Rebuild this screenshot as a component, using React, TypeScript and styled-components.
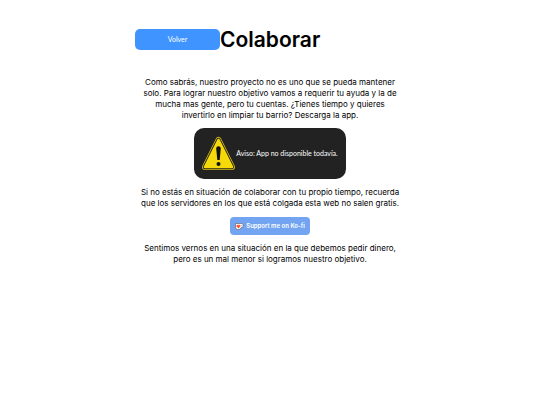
import React from "react";
import styled, { createGlobalStyle } from "styled-components";

const GlobalStyle = createGlobalStyle`
  *, *::before, *::after { box-sizing: border-box; }
  body {
    margin: 0;
    background: #fff;
    color: #000;
    font-family: Inter, "Liberation Sans", sans-serif;
    font-size: 8px;
    line-height: 11px;
  }
`;

const Page = styled.main`
  width: 50%;
  min-width: 270px;
  margin: 0 auto;
  padding: 24px 0;
  display: flex;
  flex-direction: column;
  align-items: center;
`;

const Header = styled.header`
  width: 100%;
  display: flex;
  align-items: center;
  margin-bottom: 22px;
`;

const BackButton = styled.button`
  width: 85px;
  padding: 5px 0;
  border: 0;
  border-radius: 5px;
  background: #3f94ff;
  color: #fff;
  font-family: Lato, "Liberation Sans", sans-serif;
  font-size: 7px;
  line-height: 11px;
  cursor: pointer;
`;

const Title = styled.h1`
  margin: 0;
  font-size: 21px;
  font-weight: 600;
  line-height: 31px;
`;

const Text = styled.p`
  margin: 0;
  text-align: center;
  white-space: nowrap;
`;

const Notice = styled.aside`
  display: flex;
  align-items: center;
  gap: 1px;
  margin: 7px 0 8px;
  padding: 8px;
  border-radius: 10px;
  background: #222;
  color: #fff;
  font-family: Lato, "Liberation Sans", sans-serif;
  font-size: 7px;
  font-variant-ligatures: none;
`;

const WarningIcon = styled.svg`
  width: 33px;
  height: 35px;
  flex: none;
`;

const KofiLink = styled.a`
  display: flex;
  align-items: center;
  gap: 2px;
  margin: 8px 0;
  padding: 3px 5px;
  border-radius: 4px;
  background: #72a4f2;
  color: #fff;
  font-size: 6px;
  line-height: 12px;
  font-weight: 600;
  text-decoration: none;
`;

const CupIcon = styled.svg`
  width: 9px;
  height: 7px;
  flex: none;
`;

export default function App() {
  return (
    <>
      <GlobalStyle />
      <Page>
        <Header>
          <BackButton type="button">Volver</BackButton>
          <Title>Colaborar</Title>
        </Header>
        <Text>
          Como sabrás, nuestro proyecto no es uno que se pueda mantener
          <br />
          solo. Para lograr nuestro objetivo vamos a requerir tu ayuda y la de
          <br />
          mucha mas gente, pero tu cuentas. ¿Tienes tiempo y quieres
          <br />
          invertirlo en limpiar tu barrio? Descarga la app.
        </Text>
        <Notice>
          <WarningIcon viewBox="0 0 33 35" aria-hidden="true">
            <path d="M16.5 4 30 31H3Z" fill="#d9c00c" stroke="#d9c00c" strokeWidth="6" strokeLinejoin="round" />
            <path d="M16.5 4 30 31H3Z" fill="#222" stroke="#222" strokeWidth="4.4" strokeLinejoin="round" />
            <path d="M16.5 4 30 31H3Z" fill="#f6d90a" stroke="#f6d90a" strokeWidth="2.6" strokeLinejoin="round" />
            <path d="M14.2 12.6a2.3 2.3 0 0 1 4.6 0L17.7 24h-2.4Z" fill="#111" />
            <circle cx="16.5" cy="28" r="2" fill="#111" />
          </WarningIcon>
          <span>Aviso: App no disponible todavía.</span>
        </Notice>
        <Text>
          Si no estás en situación de colaborar con tu propio tiempo, recuerda
          <br />
          que los servidores en los que está colgada esta web no salen gratis.
        </Text>
        <KofiLink href="#ko-fi">
          <CupIcon viewBox="0 0 18 14" aria-hidden="true">
            <path d="M1 1H13q4 .3 4 4t-4.500 4q-1.500 4-4.500 4H5q-4 0-4-5Z" fill="#fff" stroke="#55576a" strokeWidth="1.2" />
            <path d="M13 3.500v3q2 0 2-1.500t-2-1.500" fill="#72a4f2" />
            <path d="M7 11 3.200 7.200C1.500 4.300 5 2 7 4.200c2-2.200 5.500.1 3.800 3Z" fill="#ff5a32" />
          </CupIcon>
          <span>Support me on Ko-fi</span>
        </KofiLink>
        <Text>
          Sentimos vernos en una situación en la que debemos pedir dinero,
          <br />
          pero es un mal menor si logramos nuestro objetivo.
        </Text>
      </Page>
    </>
  );
}
